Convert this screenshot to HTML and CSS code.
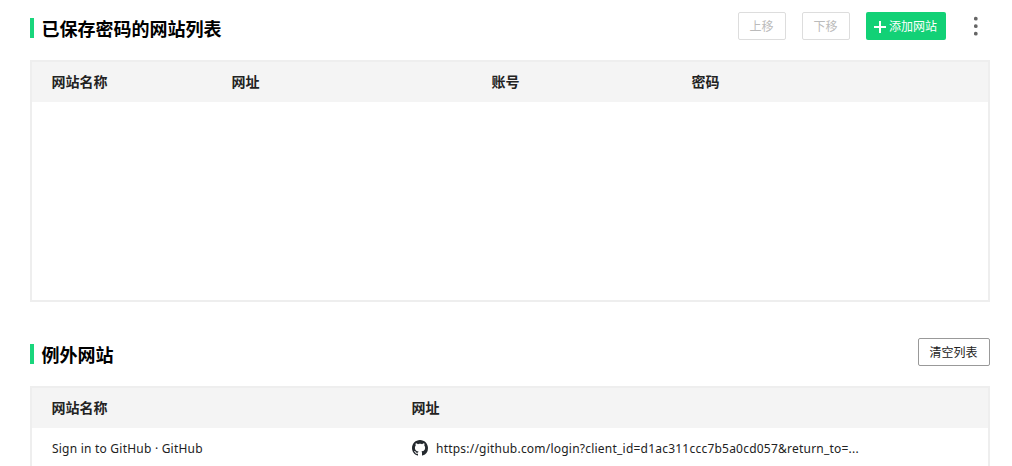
FILE: index.html
```html
<!DOCTYPE html>
<html lang="zh-CN">
<head>
    <meta charset="utf-8">
    <title>密码管理</title>
    <link rel="stylesheet" href="styles.css">
</head>
<body>
    <!-- 已保存密码 -->
    <div class="section saved">
        <div class="section-head">
            <h2 class="title">已保存密码的网站列表</h2>
            <div class="actions">
                <button class="btn" disabled>上移</button>
                <button class="btn" disabled>下移</button>
                <button class="btn btn-add">
                    <svg class="icon-plus" width="12" height="12" viewBox="0 0 12 12"><path d="M5 0h2v5h5v2H7v5H5V7H0V5h5z" fill="#fff"/></svg>
                    <span>添加网站</span>
                </button>
                <svg class="icon-more" width="4" height="20" viewBox="0 0 4 20"><circle cx="1.8" cy="2.7" r="1.9"/><circle cx="1.8" cy="10.2" r="1.9"/><circle cx="1.8" cy="17.7" r="1.9"/></svg>
            </div>
        </div>
        <div class="table">
            <div class="row thead">
                <div>网站名称</div>
                <div>网址</div>
                <div>账号</div>
                <div>密码</div>
            </div>
        </div>
    </div>

    <!-- 例外网站 -->
    <div class="section except">
        <div class="section-head">
            <h2 class="title">例外网站</h2>
            <button class="btn btn-clear">清空列表</button>
        </div>
        <div class="table">
            <div class="row thead">
                <div>网站名称</div>
                <div>网址</div>
            </div>
            <div class="row">
                <div class="name">Sign in to GitHub · GitHub</div>
                <div class="site">
                    <svg class="favicon" width="16" height="16" viewBox="0 0 16 16"><path fill="#24292e" d="M8 0C3.58 0 0 3.58 0 8c0 3.54 2.29 6.53 5.47 7.59.4.07.55-.17.55-.38 0-.19-.01-.82-.01-1.49-2.01.37-2.53-.49-2.69-.94-.09-.23-.48-.94-.82-1.13-.28-.15-.68-.52-.01-.53.63-.01 1.08.58 1.23.82.72 1.21 1.87.87 2.33.66.07-.52.28-.87.51-1.07-1.78-.2-3.64-.89-3.64-3.95 0-.87.31-1.59.82-2.15-.08-.2-.36-1.02.08-2.12 0 0 .67-.21 2.2.82.64-.18 1.32-.27 2-.27s1.36.09 2 .27c1.53-1.04 2.2-.82 2.2-.82.44 1.1.16 1.92.08 2.12.51.56.82 1.27.82 2.15 0 3.07-1.87 3.75-3.65 3.95.29.25.54.73.54 1.48 0 1.07-.01 1.93-.01 2.2 0 .21.15.46.55.38A8.01 8.01 0 0 0 16 8c0-4.42-3.58-8-8-8z"/></svg>
                    <span class="url">https://github.com/login?client_id=d1ac311ccc7b5a0cd057&amp;return_to=...</span>
                </div>
            </div>
        </div>
    </div>
</body>
</html>
```
FILE: styles.css
```css
* {
    box-sizing: border-box;
}

body {
    display: flex;
    flex-direction: column;
    height: 100vh;
    margin: 0;
    padding: 12px 22px 0 30px;
    background: #fff;
    color: #222;
    font-family: "Noto Sans", "Noto Sans CJK SC", sans-serif;
    font-size: 12px;
}

.section-head {
    display: flex;
    justify-content: space-between;
    height: 28px;
    margin-bottom: 20px;
}

.title {
    height: 20px;
    margin: 6px 0 0;
    padding-left: 7.5px;
    border-left: 4px solid #19d67c;
    color: #000;
    font-size: 18px;
    line-height: 20px;
    font-family: "Noto Sans CJK SC", sans-serif;
}

.actions {
    display: flex;
    gap: 16px;
    padding-right: 12px;
}

.btn {
    width: 48px;
    height: 28px;
    padding: 0 1px 0 0;
    border: 1px solid #999;
    border-radius: 2px;
    background: #fff;
    color: #222;
    font-family: "Noto Sans CJK SC", sans-serif;
    font-size: 12px;
    line-height: 26px;
}

.btn:disabled {
    border-color: #ddd;
    color: #bbb;
}

.btn-add {
    display: flex;
    align-items: center;
    justify-content: center;
    gap: 3px;
    width: 80px;
    border: none;
    background: #12d176;
    color: #fff;
}

.btn-clear {
    width: 72px;
}

.icon-plus {
    margin-top: 2px;
}

.icon-more {
    margin: 4px 0 0 12px;
    fill: #666;
}

.table {
    border: 2px solid #eee;
}

.row {
    display: grid;
    align-items: center;
    height: 40px;
    padding-left: 20px;
}

.thead {
    padding: 0 0 2px 19.5px;
    background: #f4f4f4;
    font-family: "Noto Sans CJK SC", sans-serif;
    font-size: 14px;
    font-weight: 600;
}

.saved .table {
    height: 242px;
}

.saved .row {
    grid-template-columns: 180px 260px 200px 1fr;
}

/* 例外列表占满剩余高度 */
.except {
    flex: 1;
    min-height: 0;
    margin-top: 36px;
}

.except .table {
    border-bottom: none;
    height: 80px;
    overflow: hidden;
}

.except .row {
    grid-template-columns: 360px 1fr;
}

/* 网址列：图标 + 链接 */
.site {
    display: flex;
    align-items: center;
    gap: 8px;
}

.name,
.url {
    letter-spacing: 0.22px;
    white-space: nowrap;
}
```
